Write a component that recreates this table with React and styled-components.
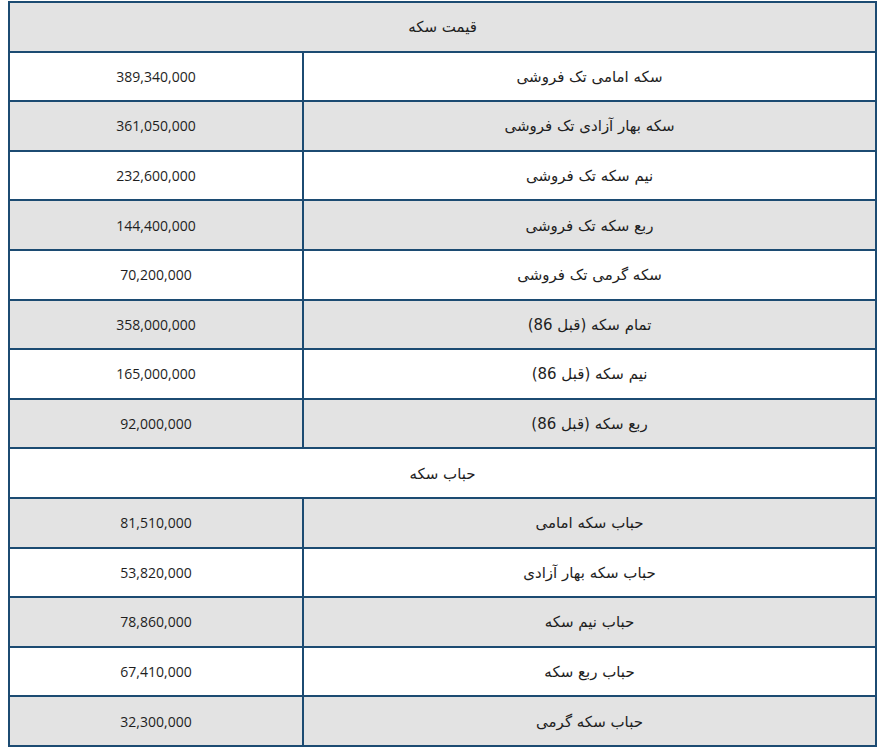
import React from 'react';
import styled, { createGlobalStyle } from 'styled-components';

const GlobalStyle = createGlobalStyle`
  body {
    margin: 0;
    background: #fff;
    font-family: "Open Sans", "DejaVu Sans", sans-serif;
  }
`;

const coins = [
  ['سکه امامی تک فروشی', '389,340,000'],
  ['سکه بهار آزادی تک فروشی', '361,050,000'],
  ['نیم سکه تک فروشی', '232,600,000'],
  ['ربع سکه تک فروشی', '144,400,000'],
  ['سکه گرمی تک فروشی', '70,200,000'],
  ['تمام سکه (قبل 86)', '358,000,000'],
  ['نیم سکه (قبل 86)', '165,000,000'],
  ['ربع سکه (قبل 86)', '92,000,000'],
];

const bubbles = [
  ['حباب سکه امامی', '81,510,000'],
  ['حباب سکه بهار آزادی', '53,820,000'],
  ['حباب نیم سکه', '78,860,000'],
  ['حباب ربع سکه', '67,410,000'],
  ['حباب سکه گرمی', '32,300,000'],
];

const Wrap = styled.div`
  padding: 1px 6px 0 8px;
`;

const Table = styled.table`
  width: 867px;
  border-collapse: collapse;
  direction: rtl;
  table-layout: fixed;
`;

const Col = styled.col`
  width: ${({ w }) => w};
`;

const Row = styled.tr`
  height: 49.6px;
  background: ${({ shaded }) => (shaded ? '#e3e3e3' : '#fff')};
`;

const Cell = styled.td`
  border: 2px solid #1c4b72;
  text-align: center;
  vertical-align: middle;
  padding: 0 4px;
  font-size: 14px;
  color: #1e1e1e;
`;

const Name = styled.span`
  font-family: "DejaVu Sans", sans-serif;
  font-size: 15px;
`;

const Section = ({ title, shaded, items, startShaded }) => (
  <>
    <Row shaded={shaded}>
      <Cell colSpan={2}><Name>{title}</Name></Cell>
    </Row>
    {items.map(([name, price], i) => (
      <Row key={name} shaded={(i % 2 === 0) === startShaded}>
        <Cell><Name>{name}</Name></Cell>
        <Cell>{price}</Cell>
      </Row>
    ))}
  </>
);

export default function App() {
  return (
    <Wrap>
      <GlobalStyle />
      <Table>
        <colgroup>
          <Col w="573px" />
          <Col w="294px" />
        </colgroup>
        <tbody>
          <Section title="قیمت سکه" shaded items={coins} startShaded={false} />
          <Section title="حباب سکه" items={bubbles} startShaded={true} />
        </tbody>
      </Table>
    </Wrap>
  );
}
